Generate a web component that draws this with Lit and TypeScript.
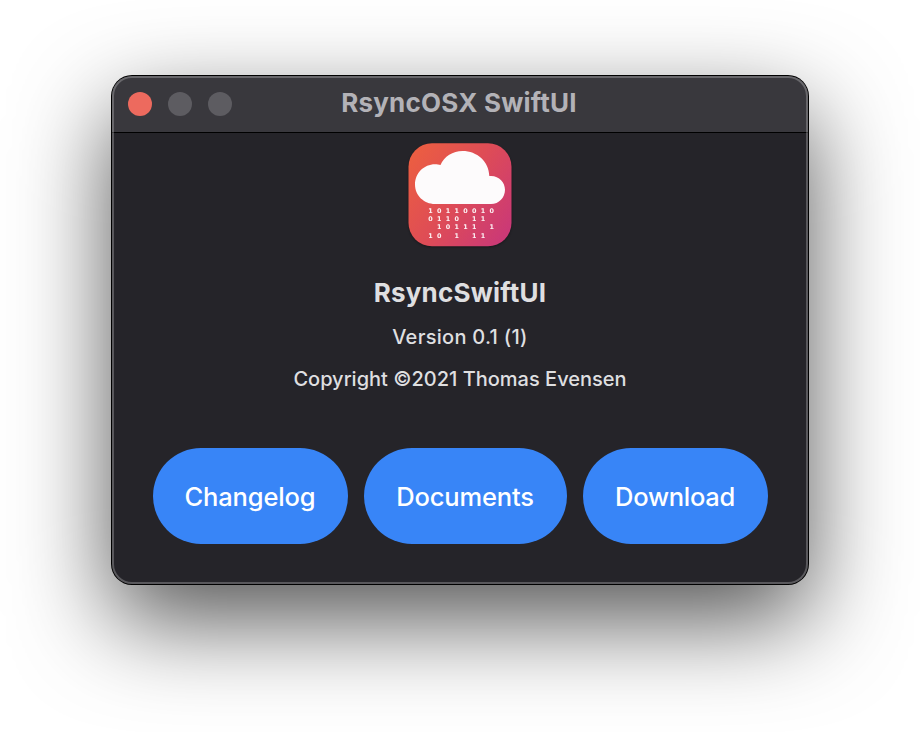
import { LitElement, html, css, svg } from "lit";
import { customElement } from "lit/decorators.js";

const RAIN = ["10110010", "0110 11 ", " 10111 1", "10 1 11 "];

@customElement("app-icon")
class AppIcon extends LitElement {
  static styles = css`
    :host { display: block; width: 104px; height: 104px; filter: drop-shadow(0 1px 1px rgba(0, 0, 0, 0.35)); }
    svg { display: block; }
    .digit { font: bold 6.4px "DejaVu Sans", sans-serif; fill: #fff; fill-opacity: 0.92; text-anchor: middle; }
  `;

  render() {
    return html`
      <svg width="104" height="104" viewBox="0 0 104 104">
        <defs>
          <linearGradient id="bg" x1="0" y1="0.12" x2="1" y2="0.8">
            <stop offset="0" stop-color="#ec5e41" />
            <stop offset="0.5" stop-color="#de4c56" />
            <stop offset="1" stop-color="#cb3976" />
          </linearGradient>
        </defs>
        <rect x="0.5" y="0.3" width="103" height="103" rx="23.5" fill="url(#bg)" />
        <path
          fill="#fdfbfc"
          d="M27 61 C16 61 7 52.5 7 41.5 C7 30 16 21.2 27 21.2 C29 21.2 31 21.5 32.5 22 C36 13.5 45 8 54.500 8 C69 8 81 18.5 81.3 33 C90.5 32 97 39 97 46.7 C97 54.5 91 61 83 61 Z"
        />
        ${RAIN.map((row, r) =>
          [...row].map((d, c) =>
            d === " " ? null : svg`<text class="digit" x=${22.4 + c * 8.75} y=${69.6 + r * 8.3}>${d}</text>`
          )
        )}
      </svg>
    `;
  }
}

@customElement("app-root")
class AppRoot extends LitElement {
  static styles = css`
    :host {
      display: block;
      box-sizing: border-box;
      width: 920px;
      height: 732px;
      padding: 76px 112px 0;
      overflow: hidden;
      background: #fff;
      font-family: Inter, "Liberation Sans", sans-serif;
    }
    .window {
      position: relative;
      display: flex;
      flex-direction: column;
      width: 696px;
      height: 508px;
      border-radius: 20px;
      background: #252429;
      box-shadow: 0 0 0 1px #000, 0 36px 96px rgba(0, 0, 0, 0.68);
      color: #dfdfe0;
    }
    .window::after {
      content: "";
      position: absolute;
      inset: 0;
      border-radius: 20px;
      box-shadow: inset 0 0 0 2px rgba(255, 255, 255, 0.24);
      pointer-events: none;
    }
    .titlebar {
      display: grid;
      grid-template-columns: 136px 1fr 136px;
      align-items: center;
      box-sizing: border-box;
      height: 57px;
      border-bottom: 1px solid #000;
      border-radius: 20px 20px 0 0;
      background: #39383d;
    }
    .lights { display: flex; gap: 16px; padding-left: 16px; }
    .light { width: 24px; height: 24px; border-radius: 50%; background: #5d5c61; }
    .close { background: #ed6a5e; }
    .title {
      color: #b3b2b7;
      font-size: 26px;
      line-height: 30px;
      font-weight: 700;
      letter-spacing: 0.22px;
      text-align: center;
      white-space: nowrap;
      margin: -2px 2px 0 0;
    }
    .content { display: flex; flex-direction: column; align-items: center; padding-top: 10px; }
    .name { margin-top: 31px; font-size: 26px; line-height: 30px; font-weight: 700; letter-spacing: 0.2px; }
    .line { font-size: 20px; line-height: 24px; font-weight: 500; }
    .version { margin-top: 17px; letter-spacing: 0.28px; }
    .copyright { margin-top: 18px; }
    .buttons { display: flex; gap: 16px; margin-top: 57px; }
    .button {
      width: 195px;
      height: 96px;
      padding: 1px 0 0;
      border: 0;
      border-radius: 48px;
      background: #3885f7;
      color: #fff;
      font: 500 25.5px/95px Inter, "Liberation Sans", sans-serif;
      letter-spacing: -0.15px;
    }
    .documents { width: 203px; }
    .download { width: 185px; letter-spacing: -0.3px; }
  `;

  render() {
    return html`
      <div class="window">
        <div class="titlebar">
          <div class="lights">
            <span class="light close"></span><span class="light"></span><span class="light"></span>
          </div>
          <div class="title">RsyncOSX SwiftUI</div>
        </div>
        <div class="content">
          <app-icon></app-icon>
          <div class="name">RsyncSwiftUI</div>
          <div class="line version">Version 0.1 (1)</div>
          <div class="line copyright">Copyright ©2021 Thomas Evensen</div>
          <div class="buttons">
            <button class="button changelog">Changelog</button>
            <button class="button documents">Documents</button>
            <button class="button download">Download</button>
          </div>
        </div>
      </div>
    `;
  }
}
